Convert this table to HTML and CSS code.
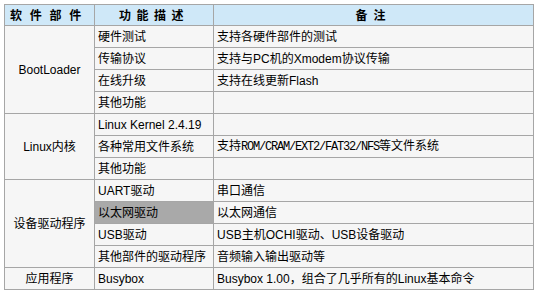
FILE: index.html
```html
<!DOCTYPE html>
<html lang="zh-CN">
<head>
<meta charset="utf-8">
<link rel="stylesheet" href="styles.css">
</head>
<body>
<table class="sw">
  <colgroup>
    <col class="c1"><col class="c2"><col class="c3">
  </colgroup>
  <thead>
    <tr class="head">
      <th class="h1">软件部件</th>
      <th class="h2">功能描述</th>
      <th class="h3">备注</th>
    </tr>
  </thead>
  <tbody>
    <tr><td class="grp" rowspan="4">BootLoader</td><td>硬件测试</td><td>支持各硬件部件的测试</td></tr>
    <tr><td>传输协议</td><td>支持与PC机的Xmodem协议传输</td></tr>
    <tr><td>在线升级</td><td>支持在线更新Flash</td></tr>
    <tr><td>其他功能</td><td></td></tr>
    <tr><td class="grp" rowspan="3">Linux内核</td><td>Linux Kernel 2.4.19</td><td></td></tr>
    <tr><td>各种常用文件系统</td><td>支持<span class="mono">ROM/CRAM/EXT2/FAT32/NFS</span>等文件系统</td></tr>
    <tr><td>其他功能</td><td></td></tr>
    <tr><td class="grp" rowspan="4">设备驱动程序</td><td>UART驱动</td><td>串口通信</td></tr>
    <tr><td class="sel">以太网驱动</td><td>以太网通信</td></tr>
    <tr><td>USB驱动</td><td>USB主机OCHI驱动、USB设备驱动</td></tr>
    <tr><td>其他部件的驱动程序</td><td>音频输入输出驱动等</td></tr>
    <tr><td class="grp">应用程序</td><td>Busybox</td><td>Busybox 1.00，组合了几乎所有的Linux基本命令</td></tr>
  </tbody>
</table>
</body>
</html>
```

FILE: styles.css
```css
html, body {
  margin: 0;
  padding: 0;
  background: #ffffff;
}
body {
  padding: 4px 0 0 4px;
  font-family: "Liberation Sans", "Noto Sans CJK SC", sans-serif;
  font-size: 12px;
  color: #000000;
  text-autospace: no-autospace;
  text-spacing-trim: space-all;
}
.sw {
  border-collapse: collapse;
  table-layout: fixed;
  width: 529px;
  background: #f6f6f6;
}
.c1 { width: 90px; }
.c2 { width: 119px; }
.c3 { width: 320px; }
.sw th, .sw td {
  border: 1px solid #a6a6a6;
  height: 21px;
  padding: 0 3px;
  line-height: 14px;
  vertical-align: middle;
  white-space: nowrap;
  overflow: hidden;
}
.head th {
  background: #cfe8f8;
  font-weight: bold;
  height: 20px;
  text-align: center;
  font-family: "Noto Sans CJK SC", sans-serif;
}
.h1 { letter-spacing: 7.7px; padding-left: 10px; }
.h2 { letter-spacing: 5.5px; padding-right: 14px; }
.h3 { letter-spacing: 6px; padding-right: 6px; }
.grp {
  text-align: center;
}
.sel {
  background: #a9a9a9;
}
.mono {
  font-family: "Liberation Mono", monospace;
  font-size: 12px;
  letter-spacing: -1.2px;
}
```
